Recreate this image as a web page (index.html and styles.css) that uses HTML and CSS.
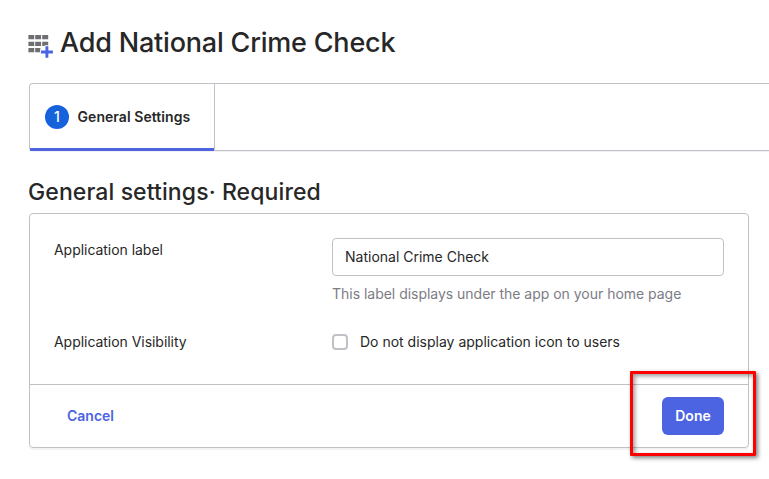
FILE: index.html
```html
<!DOCTYPE html>
<html lang="en">
<head>
  <meta charset="UTF-8">
  <meta name="viewport" content="width=device-width, initial-scale=1.0">
  <title>Add National Crime Check</title>
  <link rel="stylesheet" href="styles.css">
</head>
<body>
  <header class="page-header">
    <svg class="app-icon" width="26" height="25" viewBox="0 0 26 25" aria-hidden="true">
      <path fill="#6e6e73" d="M0.4 2h5.8v4.3h-5.8zM7.2 2h5.9v4.3h-5.9zM14.2 2h6v4.3h-6zM0.4 8.7h5.8v4.3h-5.8zM7.2 8.7h5.9v4.3h-5.9zM14.2 8.7h6v4.3h-6zM0.4 15h5.8v4.2h-5.8zM7.2 15h5.2v4.2h-5.2z"/>
      <path stroke="#fff" stroke-width="4.5" d="M18.9 12.3v12.7M12 19h13"/>
      <path stroke="#4c64e1" stroke-width="2.9" d="M18.9 13.2v11.6M12.9 19h12"/>
    </svg>
    <h1>Add National Crime Check</h1>
  </header>

  <nav class="wizard">
    <a class="wizard-tab">
      <span class="step">1</span>
      <span class="step-title">General Settings</span>
    </a>
  </nav>

  <h2>General settings<span class="dot">·</span> Required</h2>

  <form class="card">
    <div class="card-body">
      <div class="row">
        <label class="row-label" for="appLabel">Application label</label>
        <div class="row-field">
          <input id="appLabel" class="text-input" type="text" value="National Crime Check">
          <p class="hint">This label displays under the app on your home page</p>
        </div>
      </div>
      <div class="row">
        <span class="row-label visibility">Application Visibility</span>
        <label class="check">
          <input class="checkbox" type="checkbox">
          <span class="check-text">Do not display application icon to users</span>
        </label>
      </div>
    </div>
    <div class="card-footer">
      <button class="cancel" type="button">Cancel</button>
      <button class="done" type="button">Done</button>
      <div class="highlight"></div>
    </div>
  </form>
</body>
</html>
```

FILE: styles.css
```css
* {
  box-sizing: border-box;
}
body {
  margin: 0;
  min-height: 479px;
  padding: 23px 0 0 29px;
  background: #fff;
  color: #272727;
  font-family: Inter, "Liberation Sans", sans-serif;
  font-size: 14px;
  line-height: 20px;
}
h1,
h2,
p {
  margin: 0;
}
.page-header {
  display: flex;
  height: 60px;
}
.app-icon {
  flex: none;
  margin: 10px 6px 0 -1px;
}
h1 {
  font-size: 27px;
  font-weight: 500;
  line-height: 40px;
  letter-spacing: -0.2px;
  white-space: nowrap;
}
.wizard {
  display: flex;
  height: 68px;
  border: 1px solid #c1c1c8;
  border-right: none;
  border-radius: 4px 0 0 4px;
  box-shadow: 0 1px 1px #f0f0f2;
}
.wizard-tab {
  display: flex;
  align-items: center;
  width: 185px;
  height: 67px;
  padding: 0 0 1px 15px;
  border-right: 1px solid #c1c1c8;
  box-shadow: inset 0 -3px #4c64e1;
}
.step {
  width: 24px;
  height: 24px;
  margin-right: 8.5px;
  border-radius: 50%;
  background: #1662dd;
  color: #fff;
  font-weight: 500;
  line-height: 24px;
  text-align: center;
}
.step-title {
  font-weight: 600;
  letter-spacing: 0.06px;
  white-space: nowrap;
}
h2 {
  margin: 25px 0 0 -1px;
  height: 37px;
  font-size: 23px;
  font-weight: 500;
  line-height: 33px;
  letter-spacing: 0.1px;
}
.card {
  width: 720px;
  height: 235px;
  border: 1px solid #c1c1c4;
  border-radius: 4px;
  box-shadow: 0 2px 1px #f2f2f2;
}
.card-body {
  height: 171px;
  padding: 24px 24px 0;
  border-bottom: 1px solid #c1c1c4;
}
.row {
  display: flex;
}
.row-label {
  width: 278px;
  padding-top: 2px;
  letter-spacing: -0.04px;
}
.row-field {
  width: 392px;
  height: 94px;
}
.text-input {
  display: block;
  width: 100%;
  height: 38px;
  padding: 0 12px 2px;
  border: 1px solid #c1c1c8;
  border-radius: 4px;
  color: #272727;
  font: inherit;
}
.hint {
  margin-top: 8px;
  color: #7c7c85;
  letter-spacing: -0.02px;
}
.visibility {
  padding-top: 0;
}
.check {
  display: flex;
  align-items: center;
}
.checkbox {
  width: 16px;
  height: 16px;
  margin: 0 12px 0 0;
  appearance: none;
  border: 2px solid #c1c1c8;
  border-radius: 4px;
  background: #fff;
}
.card-footer {
  position: relative;
  display: flex;
  align-items: center;
  justify-content: space-between;
  height: 62px;
  padding: 0 24px;
}
.cancel,
.done {
  height: 38px;
  padding: 0 12px;
  border: 1px solid transparent;
  border-radius: 6px;
  font: inherit;
  font-weight: 600;
}
.cancel {
  background: none;
  color: #4c64e1;
}
.done {
  width: 62px;
  background: #4c64e1;
  color: #fff;
}
/* red call-out frame around the Done button */
.highlight {
  position: absolute;
  top: -14px;
  right: -8px;
  width: 126px;
  height: 85px;
  border: 3px solid #fe0000;
  border-radius: 1px;
  box-shadow: 2px 2px 4px rgba(0, 0, 0, 0.5), inset 2px 2px 4px rgba(0, 0, 0, 0.4);
  pointer-events: none;
}
```
